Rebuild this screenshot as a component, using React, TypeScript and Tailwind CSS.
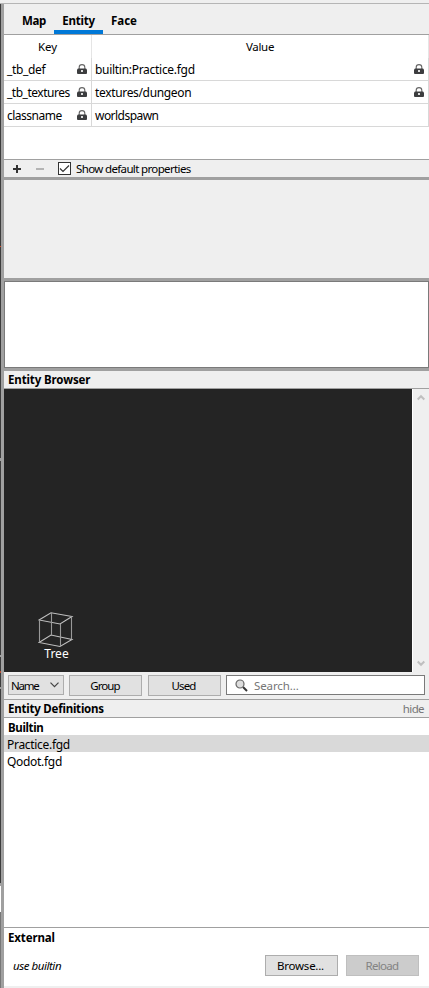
import React from "react";

function T({ children, className = "" }: { children: React.ReactNode; className?: string }) {
  return <span className={`block whitespace-nowrap leading-4 ${className}`}>{children}</span>;
}

function Lock() {
  return (
    <svg width="10" height="11" viewBox="0 0 10 11" className="shrink-0">
      <path d="M2.200 5V3.200a2.800 2.600 0 0 1 5.600 0V5" fill="none" stroke="#666" strokeWidth="1.100" />
      <path d="M1 4.500h8l1 1V9.500l-1 .5H1l-1-.5V5.500z" fill="#3c3d3f" />
      <rect x="4" y="6" width="2" height="2" fill="#ddd" />
    </svg>
  );
}

function Row({ name, value, locked, valueLocked, nameClass, valueClass }: {
  name: string; value: string; locked: boolean; valueLocked: boolean; nameClass: string; valueClass: string;
}) {
  return (
    <div className="flex h-[23px] border-b border-[#d8d8d8] text-[12px]">
      <div className="flex w-[88px] items-center justify-between border-r border-[#d8d8d8] pl-[3px] pr-1">
        <T className={`pt-[2px] ${nameClass}`}>{name}</T>
        {locked && <Lock />}
      </div>
      <div className="flex flex-1 items-center justify-between border-r border-[#d8d8d8] pl-[3px] pr-1">
        <T className={`pt-[2px] ${valueClass}`}>{value}</T>
        {valueLocked && <Lock />}
      </div>
    </div>
  );
}

function Button({ children, className = "" }: { children: React.ReactNode; className?: string }) {
  return (
    <button className={`flex h-[21px] w-[73px] shrink-0 items-center justify-center border ${className}`}>{children}</button>
  );
}

function EdgeStrip() {
  return (
    <div className="flex w-px shrink-0 flex-col bg-[#3c3c3c]">
      <div className="h-[242px]" />
      <div className="h-px bg-[#d04a28]" />
      <div className="h-[211px]" />
      <div className="h-[3px] bg-[#a0a0a0]" />
      <div className="h-[194px]" />
      <div className="h-[2px] bg-[#a0a0a0]" />
      <div className="h-[14px]" />
      <div className="h-[2px] bg-[#b84a30]" />
      <div className="h-[14px]" />
      <div className="h-[2px] bg-[#a0a0a0]" />
      <div className="h-[194px]" />
      <div className="h-[3px] bg-[#a0a0a0]" />
      <div className="h-[26px] bg-white" />
      <div className="flex-1 bg-[#777]" />
    </div>
  );
}

export default function App() {
  return (
    <div className="flex h-[988px] w-[429px] flex-col overflow-hidden bg-[#efefef] font-['Noto_Sans','Open_Sans',sans-serif] text-[11px] text-black">
      <div className="h-1 shrink-0 border-b border-[#b5b5b5]" />
      <div className="flex min-h-0 flex-1">
        <EdgeStrip />
        <div className="w-[3px] shrink-0 bg-[#a0a0a0]" />
        <main className="flex min-w-0 flex-1 flex-col">
          <nav className="flex h-[31px] shrink-0 border-b border-[#a0a0a0] pl-[10px] text-[11.5px] font-bold">
            <div className="flex w-10 justify-center pt-[9px]"><T className="tracking-[-0.3px]">Map</T></div>
            <div className="flex w-[49px] justify-center border-b-4 border-[#0078d7] pt-[9px]"><T className="tracking-[-0.2px]">Entity</T></div>
            <div className="flex w-[42px] justify-center pt-[9px]"><T>Face</T></div>
          </nav>

          <section className="h-[124px] shrink-0 bg-white">
            <div className="flex h-[23px] text-[11.5px]">
              <div className="flex w-[88px] items-center justify-center border-r border-[#e5e5e5]"><T className="pt-px">Key</T></div>
              <div className="flex flex-1 items-center justify-center border-r border-[#e5e5e5]"><T className="pt-px tracking-[-0.3px]">Value</T></div>
            </div>
            <Row name="_tb_def" value="builtin:Practice.fgd" locked valueLocked nameClass="tracking-[-0.350px]" valueClass="tracking-[-0.290px]" />
            <Row name="_tb_textures" value="textures/dungeon" locked valueLocked nameClass="tracking-[-0.480px]" valueClass="tracking-[-0.340px]" />
            <Row name="classname" value="worldspawn" locked valueLocked={false} nameClass="tracking-[-0.500px]" valueClass="tracking-[-0.540px]" />
          </section>

          <div className="flex h-[18px] shrink-0 items-center border-t border-[#a0a0a0] pl-[9px]">
            <svg width="8" height="8" viewBox="0 0 8 8"><path d="M4 0v8M0 4h8" stroke="#333" strokeWidth="2" /></svg>
            <svg width="8" height="8" viewBox="0 0 8 8" className="ml-[15px]"><path d="M0 4h8" stroke="#b4b4b4" strokeWidth="2" /></svg>
            <svg width="13" height="13" viewBox="0 0 13 13" className="ml-[14px]">
              <rect x=".5" y=".5" width="12" height="12" fill="#fff" stroke="#333" />
              <path d="M2 6.500l3 3 6-6" fill="none" stroke="#333" strokeWidth="1.200" />
            </svg>
            <T className="ml-[5px] text-[11.5px] tracking-[-0.640px]">Show default properties</T>
          </div>

          <div className="h-[104px] shrink-0 border-y-[3px] border-[#a0a0a0]" />
          <div className="h-[87px] shrink-0 border border-[#7a7a7a] bg-white" />
          <div className="h-[3px] shrink-0 bg-[#a0a0a0]" />

          <header className="flex h-[18px] shrink-0 items-center border-b border-[#a0a0a0] pl-1 text-[11.5px] font-bold"><T className="pt-px tracking-[-0.120px]">Entity Browser</T></header>
          <div className="flex h-[283px] shrink-0">
            <div className="flex flex-1 items-end bg-[#242424] pb-[11px] pl-[34px]">
              <div className="flex flex-col items-center">
                <svg width="36" height="36" viewBox="0 0 36 36" fill="none" stroke="#c0c0c0" strokeWidth="1.100">
                  <path d="M1 8L13 .8 34 4.500 22 12zM1 30.500L13 23 34 27.500 22 34.500z" />
                  <path d="M1.500 8v22.500M13.500 .8V23M33.500 4.500v23M22.500 12v22.500" stroke="#999" />
                </svg>
                <T className="-mt-px h-[14px] pl-px text-[12px] leading-[14px] text-white">Tree</T>
              </div>
            </div>
            <div className="flex w-[17px] flex-col items-center justify-between border-l border-white py-[5px]">
              <svg width="8" height="7" viewBox="0 0 8 7"><path d="M.7 5.500L4 2.200l3.300 3.300" fill="none" stroke="#bfbfbf" strokeWidth="2" /></svg>
              <svg width="8" height="7" viewBox="0 0 8 7"><path d="M.7 1.500L4 4.800l3.300-3.300" fill="none" stroke="#bfbfbf" strokeWidth="2" /></svg>
            </div>
          </div>

          <div className="flex h-[27px] shrink-0 items-start pl-1 pr-1 pt-[3px]">
            <div className="flex h-5 w-14 items-center justify-between border border-[#adadad] bg-[#e1e1e1] pl-[2px] pr-1">
              <T className="pt-[2px] text-[11.5px] tracking-[-1.200px]">Name</T>
              <svg width="9" height="6" viewBox="0 0 9 6"><path d="M.5.700l4 4 4-4" fill="none" stroke="#444" strokeWidth="1.200" /></svg>
            </div>
            <Button className="ml-[5px] border-[#adadad] bg-[#e1e1e1]"><T className="pr-px text-[11.5px] tracking-[-0.950px]">Group</T></Button>
            <Button className="ml-[6px] border-[#adadad] bg-[#e1e1e1]"><T className="pr-[2px] text-[11.5px] tracking-[-0.900px]">Used</T></Button>
            <div className="ml-[5px] flex h-5 flex-1 items-center border border-[#7a7a7a] bg-white pl-2">
              <svg width="13" height="13" viewBox="0 0 13 13">
                <path d="M8 8l4 4" stroke="#333" strokeWidth="2" />
                <circle cx="5" cy="5" r="4" fill="#ddd" stroke="#666" strokeWidth="1.200" />
              </svg>
              <T className="ml-[6px] pt-[2px] text-[11.5px] tracking-[-0.100px] text-[#767676]">Search...</T>
            </div>
          </div>

          <header className="flex h-[19px] shrink-0 items-center justify-between border-y border-[#a0a0a0] pl-1 pr-1 text-[11.5px]">
            <T className="pt-px font-bold tracking-[-0.220px]">Entity Definitions</T>
            <T className="pr-px tracking-[-0.600px] text-[#767676]">hide</T>
          </header>
          <section className="h-[209px] shrink-0 bg-white">
            <div className="flex h-[17px] items-center pl-1 text-[11.5px] font-bold"><T className="pt-[2px] tracking-[-0.350px]">Builtin</T></div>
            <div className="flex h-[17px] items-center bg-[#d9d9d9] pl-[3px] text-[12px]"><T className="pt-[2px] tracking-[-0.300px]">Practice.fgd</T></div>
            <div className="flex h-[17px] items-center pl-[3px] text-[12px]"><T className="pt-[2px] tracking-[-0.300px]">Qodot.fgd</T></div>
          </section>
          <section className="h-[59px] shrink-0 border-t border-[#a0a0a0] bg-white">
            <div className="flex h-[18px] items-center pl-1 text-[11.5px] font-bold"><T className="pt-[2px] tracking-[-0.130px]">External</T></div>
            <div className="mt-[9px] flex pl-[9px] pr-[10px]">
              <div className="flex flex-1 items-center"><T className="text-[11.5px] italic tracking-[-0.450px]">use builtin</T></div>
              <Button className="border-[#adadad] bg-[#e1e1e1]"><T className="pr-[2px] text-[11.5px] tracking-[-0.250px]">Browse...</T></Button>
              <Button className="ml-2 border-[#bfbfbf] bg-[#ccc] text-[#838383]"><T className="pr-px text-[11.5px] tracking-[-0.700px]">Reload</T></Button>
            </div>
          </section>
        </main>
      </div>
    </div>
  );
}
